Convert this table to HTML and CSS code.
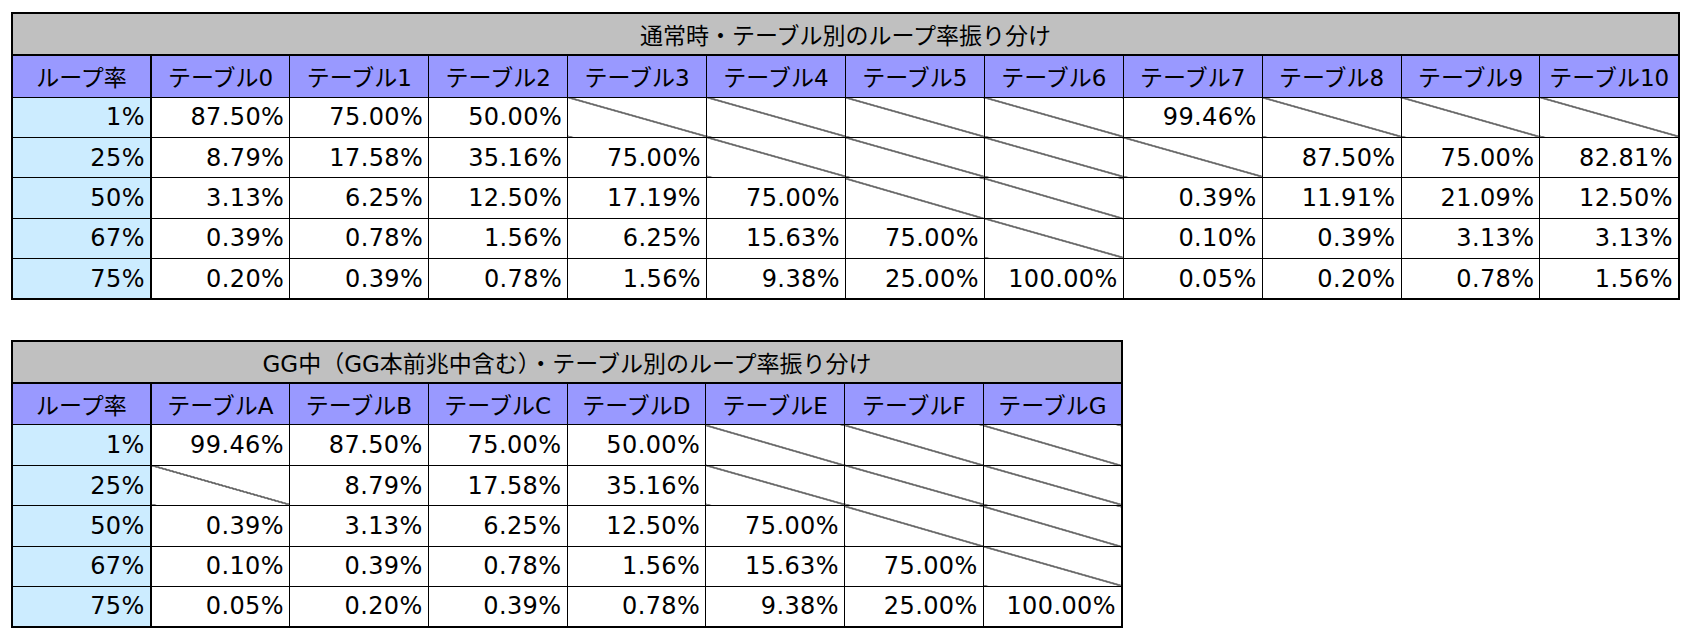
FILE: index.html
```html
<!DOCTYPE html>
<html lang="ja">
<head>
<meta charset="utf-8">
<title>ループ率振り分け</title>
<link rel="stylesheet" href="styles.css">
</head>
<body>
<div class="page">
<table class="loop t12">
  <tr class="title"><th colspan="12">通常時・テーブル別のループ率振り分け</th></tr>
  <tr class="head"><th class="rate">ループ率</th><th>テーブル0</th><th>テーブル1</th><th>テーブル2</th><th>テーブル3</th><th>テーブル4</th><th>テーブル5</th><th>テーブル6</th><th>テーブル7</th><th>テーブル8</th><th>テーブル9</th><th>テーブル10</th></tr>
  <tr><td class="rate">1%</td><td>87.50%</td><td>75.00%</td><td>50.00%</td><td class="x"></td><td class="x"></td><td class="x"></td><td class="x"></td><td>99.46%</td><td class="x"></td><td class="x"></td><td class="x"></td></tr>
  <tr><td class="rate">25%</td><td>8.79%</td><td>17.58%</td><td>35.16%</td><td>75.00%</td><td class="x"></td><td class="x"></td><td class="x"></td><td class="x"></td><td>87.50%</td><td>75.00%</td><td>82.81%</td></tr>
  <tr><td class="rate">50%</td><td>3.13%</td><td>6.25%</td><td>12.50%</td><td>17.19%</td><td>75.00%</td><td class="x"></td><td class="x"></td><td>0.39%</td><td>11.91%</td><td>21.09%</td><td>12.50%</td></tr>
  <tr><td class="rate">67%</td><td>0.39%</td><td>0.78%</td><td>1.56%</td><td>6.25%</td><td>15.63%</td><td>75.00%</td><td class="x"></td><td>0.10%</td><td>0.39%</td><td>3.13%</td><td>3.13%</td></tr>
  <tr><td class="rate">75%</td><td>0.20%</td><td>0.39%</td><td>0.78%</td><td>1.56%</td><td>9.38%</td><td>25.00%</td><td>100.00%</td><td>0.05%</td><td>0.20%</td><td>0.78%</td><td>1.56%</td></tr>
</table>

<table class="loop t8">
  <tr class="title"><th colspan="8">GG中（GG本前兆中含む）・テーブル別のループ率振り分け</th></tr>
  <tr class="head"><th class="rate">ループ率</th><th>テーブルA</th><th>テーブルB</th><th>テーブルC</th><th>テーブルD</th><th>テーブルE</th><th>テーブルF</th><th>テーブルG</th></tr>
  <tr><td class="rate">1%</td><td>99.46%</td><td>87.50%</td><td>75.00%</td><td>50.00%</td><td class="x"></td><td class="x"></td><td class="x"></td></tr>
  <tr><td class="rate">25%</td><td class="x"></td><td>8.79%</td><td>17.58%</td><td>35.16%</td><td class="x"></td><td class="x"></td><td class="x"></td></tr>
  <tr><td class="rate">50%</td><td>0.39%</td><td>3.13%</td><td>6.25%</td><td>12.50%</td><td>75.00%</td><td class="x"></td><td class="x"></td></tr>
  <tr><td class="rate">67%</td><td>0.10%</td><td>0.39%</td><td>0.78%</td><td>1.56%</td><td>15.63%</td><td>75.00%</td><td class="x"></td></tr>
  <tr><td class="rate">75%</td><td>0.05%</td><td>0.20%</td><td>0.39%</td><td>0.78%</td><td>9.38%</td><td>25.00%</td><td>100.00%</td></tr>
</table>
</div>
</body>
</html>
```

FILE: styles.css
```css
html, body {
  margin: 0;
  padding: 0;
  background: #fff;
}

.page {
  display: flex;
  flex-direction: column;
  align-items: flex-start;
  gap: 40px;
  padding: 12px 0 0 11px;
  font-family: "DejaVu Sans", "Noto Sans CJK JP", sans-serif;
  color: #000;
}

.loop {
  border-collapse: collapse;
  table-layout: fixed;
  border: 2px solid #000;
}

.t12 { width: 1669px; }
.t8 { width: 1112px; }

.loop th,
.loop td {
  border: 1px solid #000;
  padding: 0 5px;
  overflow: hidden;
  white-space: nowrap;
}

.loop th {
  font-weight: normal;
  font-size: 23px;
  text-align: center;
  background: #9999ff;
}

.loop tr.title th {
  background: #c0c0c0;
  border-bottom: 2px solid #000;
}

.loop tr { height: 40.4px; }
.loop tr.title { height: 42px; }
.loop tr.head { height: 42px; }

.loop td {
  font-size: 24px;
  letter-spacing: 0.4px;
  text-align: right;
  background: #fff;
}

.loop .rate {
  border-right: 2px solid #000;
}

.loop td.rate {
  background: #ccecff;
}

.loop td.x {
  background: #fff linear-gradient(to top right,
    transparent calc(50% - 0.8px),
    #000 calc(50% - 0.3px),
    #000 calc(50% + 0.3px),
    transparent calc(50% + 0.8px));
}
```
